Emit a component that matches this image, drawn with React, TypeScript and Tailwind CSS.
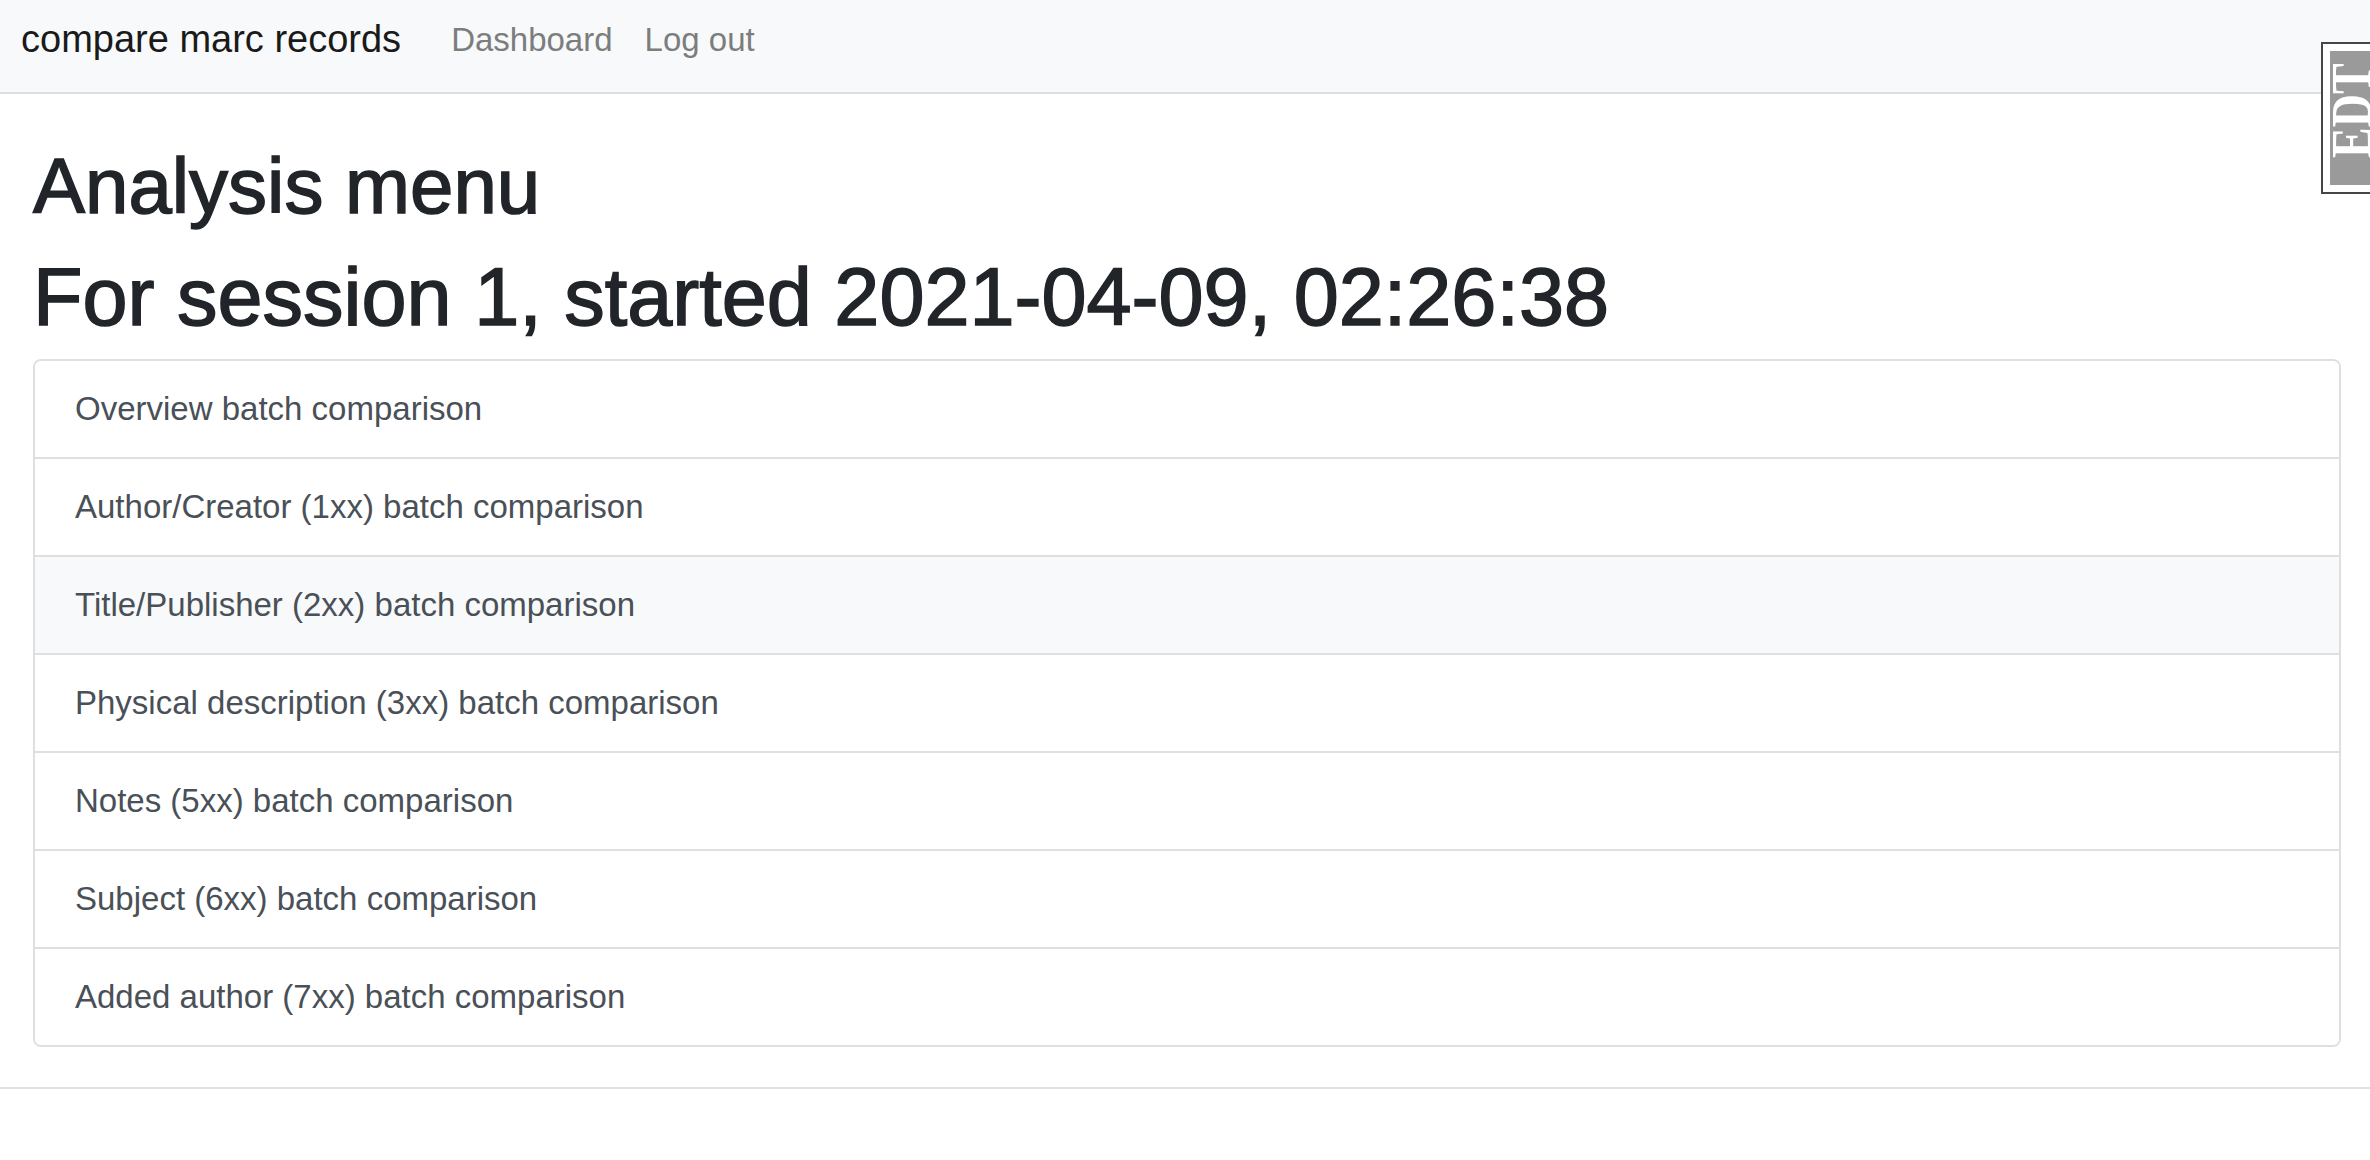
const ITEMS = [
  'Overview batch comparison',
  'Author/Creator (1xx) batch comparison',
  'Title/Publisher (2xx) batch comparison',
  'Physical description (3xx) batch comparison',
  'Notes (5xx) batch comparison',
  'Subject (6xx) batch comparison',
  'Added author (7xx) batch comparison',
];

// the row that sits under the mouse in the screenshot
const HOVERED = 2;

function EdtBadge() {
  return (
    <div className="fixed top-[42px] right-0 w-[49px] border-y-2 border-l-2 border-[#464646] bg-white py-[7px] pl-[7px]">
      <div className="relative h-[134px] w-[40px] overflow-hidden bg-[#9a9a9a]">
        <span className="absolute left-[-7px] top-[107px] origin-top-left -rotate-90 scale-y-[1.25] whitespace-nowrap text-[46px] font-bold leading-none text-white [font-family:'Liberation_Serif',serif]">
          EDT
        </span>
      </div>
    </div>
  );
}

export default function App() {
  return (
    <div className="min-h-screen bg-white text-[#212529] [font-family:'Liberation_Sans',Arial,sans-serif]">
      <nav className="flex h-[94px] items-start border-b-2 border-[#dddddd] bg-[#f8f9fa] pl-[21px] pt-[20px]">
        <a className="mr-[34px] text-[38px] leading-none text-[#1a1a1a]">compare marc records</a>
        <a className="mt-[3px] px-4 text-[33px] leading-none text-[#7c7d7d]">Dashboard</a>
        <a className="mt-[3px] px-4 text-[33px] leading-none text-[#7c7d7d]">Log out</a>
      </nav>

      <main className="pl-[33px] pr-[29px]">
        <h1 className="mt-[45px] text-[78px] font-medium leading-[94px] [-webkit-text-stroke:1.5px_#212529]">
          Analysis menu
        </h1>
        <h1 className="mt-[16px] text-[81px] font-medium leading-[97px] [-webkit-text-stroke:1.5px_#212529]">
          For session 1, started 2021-04-09, 02:26:38
        </h1>

        <div className="mt-[13px] overflow-hidden rounded-[8px] border-2 border-[#dfdfdf]">
          {ITEMS.map((item, i) => (
            <div
              key={item}
              className={`px-[40px] py-[24px] text-[33px] leading-[48px] text-[#495057] ${
                i > 0 ? 'border-t-2 border-[#dfdfdf]' : ''
              } ${i === HOVERED ? 'bg-[#f8f9fa]' : 'bg-white'}`}
            >
              {item}
            </div>
          ))}
        </div>
      </main>

      <hr className="mt-[40px] border-t-2 border-[#e2e2e2]" />

      <EdtBadge />
    </div>
  );
}
